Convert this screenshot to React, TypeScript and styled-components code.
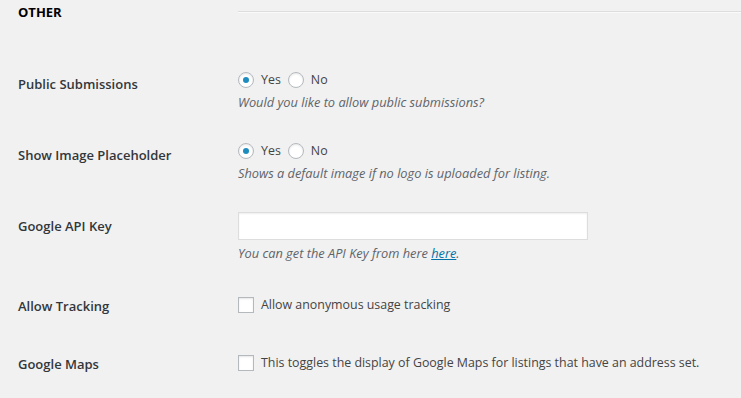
import styled, { createGlobalStyle } from 'styled-components';

const GlobalStyle = createGlobalStyle`
  html, body {
    margin: 0;
    padding: 0;
    background: #f1f1f1;
  }
  body {
    font-family: "Open Sans", "Liberation Sans", sans-serif;
    font-size: 13px;
    color: #444;
  }
`;

const Page = styled.div`
  padding: 0 0 0 18px;
`;

const SectionHeader = styled.div`
  display: grid;
  grid-template-columns: 220px 1fr;
  align-items: center;
  height: 24px;
  margin-bottom: 31px;
`;

const SectionTitle = styled.h2`
  margin: 0;
  font-size: 13px;
  font-weight: 700;
  color: #000;
  line-height: 18px;
  text-transform: uppercase;
`;

const Rule = styled.hr`
  margin: 0;
  border: 0;
  border-top: 1px solid #ddd;
  border-bottom: 1px solid #fafafa;
`;

const Row = styled.div`
  display: grid;
  grid-template-columns: 220px 1fr;
`;

const Label = styled.div`
  padding: 20px 0;
  font-size: 13px;
  font-weight: 600;
  line-height: 18px;
  color: #32373c;
`;

const Field = styled.div`
  padding: 15px 0;
  align-self: center;
  line-height: 18px;
`;

const Choices = styled.div`
  display: flex;
  align-items: center;
  height: 18px;
  padding-top: 1px;
`;

const Choice = styled.label`
  display: inline-flex;
  align-items: center;
  margin-right: 7px;
  font-size: 12.4px;
  line-height: 18px;
  white-space: nowrap;
  color: #444;
`;

const Radio = styled.input.attrs({ type: 'radio' })`
  appearance: none;
  width: 16px;
  height: 16px;
  margin: 0 7px 0 0;
  border: 1px solid #b4b9be;
  border-radius: 50%;
  background: #fff;
  box-shadow: inset 0 1px 2px rgba(0, 0, 0, 0.1);
  display: grid;
  place-items: center;
  box-sizing: border-box;

  &:checked::before {
    content: '';
    width: 6px;
    height: 6px;
    border-radius: 50%;
    background: #1e8cbe;
  }
`;

const Checkbox = styled.input.attrs({ type: 'checkbox' })`
  appearance: none;
  width: 16px;
  height: 16px;
  margin: 0 7px 0 0;
  border: 1px solid #b4b9be;
  background: #fff;
  box-shadow: inset 0 1px 2px rgba(0, 0, 0, 0.1);
  box-sizing: border-box;
`;

const Description = styled.p<{ $gap?: number }>`
  margin: ${(p) => p.$gap ?? 4}px 0 0;
  font-size: 12.8px;
  font-style: italic;
  line-height: 18px;
  color: #60646a;

  a {
    color: #0073aa;
  }
`;

const TextInput = styled.input`
  display: block;
  width: 350px;
  height: 28px;
  box-sizing: border-box;
  border: 1px solid #ddd;
  background: #fff;
  box-shadow: inset 0 1px 2px rgba(0, 0, 0, 0.07);
  padding: 3px 5px;
  font-size: 13px;
`;

function YesNo({ name }: { name: string }) {
  return (
    <Choices>
      <Choice>
        <Radio name={name} defaultChecked />
        Yes
      </Choice>
      <Choice>
        <Radio name={name} />
        No
      </Choice>
    </Choices>
  );
}

export default function App() {
  return (
    <>
      <GlobalStyle />
      <Page>
        <SectionHeader>
          <SectionTitle>Other</SectionTitle>
          <Rule />
        </SectionHeader>

        <Row>
          <Label>Public Submissions</Label>
          <Field>
            <YesNo name="public_submissions" />
            <Description>Would you like to allow public submissions?</Description>
          </Field>
        </Row>

        <Row>
          <Label>Show Image Placeholder</Label>
          <Field>
            <YesNo name="image_placeholder" />
            <Description>Shows a default image if no logo is uploaded for listing.</Description>
          </Field>
        </Row>

        <Row>
          <Label>Google API Key</Label>
          <Field>
            <TextInput type="text" />
            <Description $gap={4}>
              You can get the API Key from here <a href="#">here</a>.
            </Description>
          </Field>
        </Row>

        <Row>
          <Label>Allow Tracking</Label>
          <Field>
            <Choice>
              <Checkbox />
              Allow anonymous usage tracking
            </Choice>
          </Field>
        </Row>

        <Row>
          <Label>Google Maps</Label>
          <Field>
            <Choice>
              <Checkbox />
              This toggles the display of Google Maps for listings that have an address set.
            </Choice>
          </Field>
        </Row>
      </Page>
    </>
  );
}
